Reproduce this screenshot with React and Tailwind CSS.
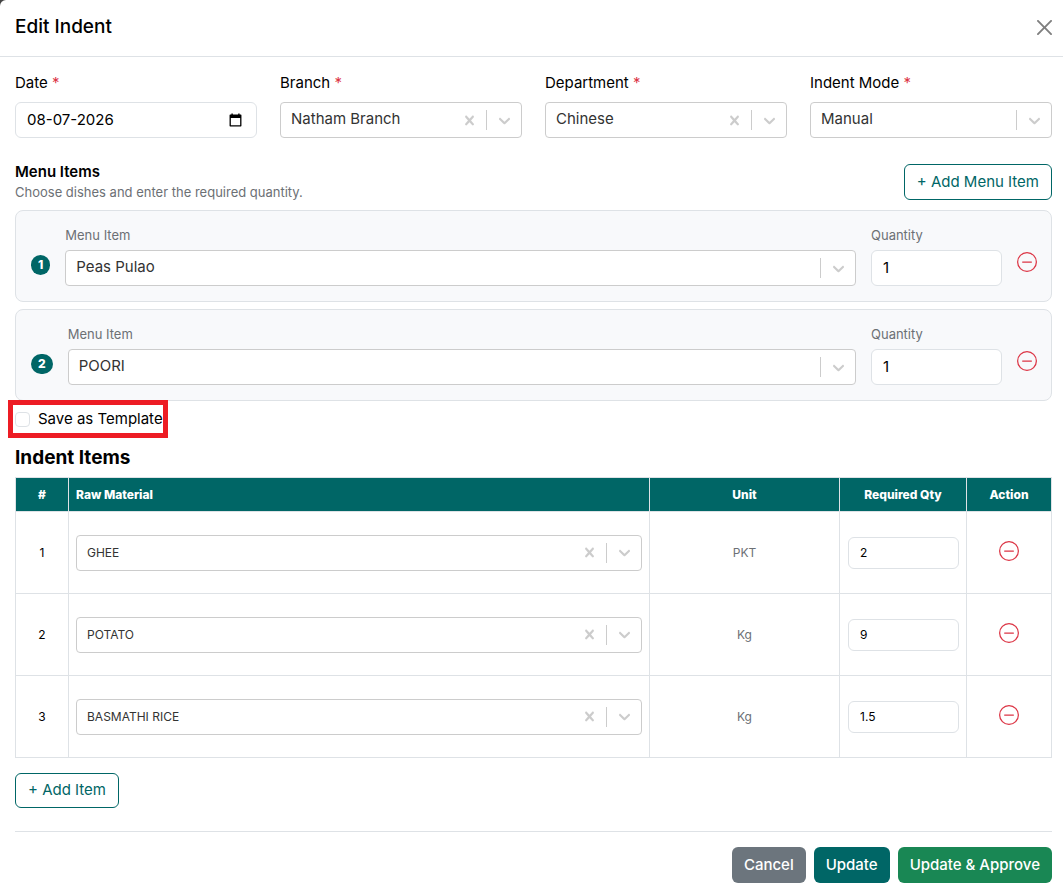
import { useState } from "react";
import { BsDashCircle } from "react-icons/bs";

const menuItems = [
  { id: 1, name: "Peas Pulao", qty: "1" },
  { id: 2, name: "POORI", qty: "1" },
];

const indentItems = [
  { id: 1, name: "GHEE", unit: "PKT", qty: "2" },
  { id: 2, name: "POTATO", unit: "Kg", qty: "9" },
  { id: 3, name: "BASMATHI RICE", unit: "Kg", qty: "1.5" },
];



// =====================================
// SELECT BOX
// =====================================

function SelectBox({ id, label, value, clearable, small }) {

  return (

    <div className="flex h-9 w-full items-center rounded-sm border border-[#cccccc] bg-white">

      <select
        id={id}
        aria-label={label}
        defaultValue={value}
        className={
          "h-full min-w-0 flex-1 appearance-none bg-transparent pl-[10px] text-[#333333] outline-none " +
          (small ? "text-xs" : "pb-px text-[15px]")
        }
      >
        <option>{value}</option>
      </select>

      {clearable && (

        <button type="button" aria-label="Clear" className="pr-[7px] pl-2 text-[#cccccc]">

          <svg width="19" height="19" viewBox="0 0 20 20" fill="currentColor">
            <path d="M14.348 14.849c-0.469 0.469-1.229 0.469-1.697 0l-2.651-3.030-2.651 3.029c-0.469 0.469-1.229 0.469-1.697 0-0.469-0.469-0.469-1.229 0-1.697l2.758-3.15-2.759-3.152c-0.469-0.469-0.469-1.228 0-1.697s1.228-0.469 1.697 0l2.652 3.031 2.651-3.031c0.469-0.469 1.228-0.469 1.697 0s0.469 1.229 0 1.697l-2.758 3.152 2.758 3.15c0.469 0.469 0.469 1.229 0 1.698z" />
          </svg>

        </button>
      )}

      <span className="h-5 w-px bg-[#cccccc]"></span>

      <span className="pr-[7px] pl-2 text-[#cccccc]">

        <svg width="19" height="19" viewBox="0 0 20 20" fill="currentColor">
          <path d="M4.516 7.548c0.436-0.446 1.043-0.481 1.576 0l3.908 3.747 3.908-3.747c0.533-0.481 1.141-0.446 1.574 0 0.436 0.445 0.408 1.197 0 1.615-0.406 0.418-4.695 4.502-4.695 4.502-0.217 0.223-0.502 0.335-0.787 0.335s-0.57-0.112-0.789-0.335c0 0-4.287-4.084-4.695-4.502s-0.436-1.17 0-1.615z" />
        </svg>

      </span>

    </div>
  );
}



function FieldLabel({ id, text }) {

  return (

    <label htmlFor={id} className="mb-2 block leading-[22px]">
      {text} <span className="text-[#dc3545]">*</span>
    </label>
  );
}



function RemoveButton() {

  return (

    <button type="button" aria-label="Remove" className="block text-[#dc3545]">
      <BsDashCircle size={20} />
    </button>
  );
}



function App() {

  const [saveTemplate, setSaveTemplate] = useState(false);

  return (

    <div className="min-h-screen bg-[#444444]">

      <div className="min-h-screen rounded-tl-md bg-white font-['Inter',sans-serif] text-[15px] text-black">

        {/* HEADER */}

        <div className="flex h-[57px] items-center justify-between border-b border-[#dee2e6] pr-[11px] pb-[2px] pl-[15px]">

          <h1 className="text-[19px] font-medium">Edit Indent</h1>

          <button type="button" aria-label="Close" className="text-[#7f7f7f]">

            <svg width="15" height="15" viewBox="0 0 16 16" fill="currentColor">
              <path d="M.293.293a1 1 0 0 1 1.414 0L8 6.586 14.293.293a1 1 0 1 1 1.414 1.414L9.414 8l6.293 6.293a1 1 0 0 1-1.414 1.414L8 9.414l-6.293 6.293a1 1 0 0 1-1.414-1.414L6.586 8 .293 1.707a1 1 0 0 1 0-1.414z" />
            </svg>

          </button>

        </div>



        <div className="pt-[15px] pr-[11px] pb-[10px] pl-[15px]">

          {/* FORM FIELDS */}

          <div className="grid grid-cols-4 gap-[23px]">

            <div>
              <FieldLabel id="date" text="Date" />

              <div className="flex h-9 items-center rounded-md border border-[#dee2e6] pr-[14px]">

                <input
                  id="date"
                  type="text"
                  defaultValue="08-07-2026"
                  className="h-full min-w-0 flex-1 bg-transparent pb-[2px] pl-[11px] outline-none"
                />

                <button type="button" aria-label="Open calendar">
                  <svg width="13" height="14" viewBox="0 0 13 14">
                    <path d="M1.2 2.2h10.6v10.6H1.2z" fill="none" stroke="#000" strokeWidth="1.3" strokeLinejoin="round" />
                    <path d="M1 2h11v3H1zM2.4.4h1.4v2H2.4zM9.2.4h1.4v2H9.2z" />
                  </svg>
                </button>

              </div>
            </div>

            <div>
              <FieldLabel id="branch" text="Branch" />
              <SelectBox id="branch" value="Natham Branch" clearable />
            </div>

            <div>
              <FieldLabel id="department" text="Department" />
              <SelectBox id="department" value="Chinese" clearable />
            </div>

            <div>
              <FieldLabel id="mode" text="Indent Mode" />
              <SelectBox id="mode" value="Manual" />
            </div>

          </div>



          {/* MENU ITEMS */}

          <div className="mt-[26px] mb-[10px] flex items-start justify-between">

            <div className="-mt-1">
              <h2 className="leading-6 font-semibold">Menu Items</h2>
              <p className="text-[13px] leading-4 text-[#6c7075]">
                Choose dishes and enter the required quantity.
              </p>
            </div>

            <button
              type="button"
              className="h-9 rounded-md border border-[#006666] px-3 text-[#006666]"
            >
              + Add Menu Item
            </button>

          </div>

          <div className="flex flex-col gap-[7px]">

            {menuItems.map((item) => (

              <div
                key={item.id}
                className="flex items-center gap-[15px] rounded-lg border border-[#dee2e6] bg-[#f8f9fb] py-[15px] pr-[14px] pl-[15px]"
              >

                <div className="pt-[18px]">
                  <span className="block rounded-full bg-[#006666] px-[7px] text-xs leading-5 font-extrabold text-white">
                    {item.id}
                  </span>
                </div>

                <div className="flex-1">
                  <label
                    htmlFor={"menu-" + item.id}
                    className="mb-[6px] block text-[13px] leading-[18px] text-[#6c7075]"
                  >
                    Menu Item
                  </label>
                  <SelectBox id={"menu-" + item.id} value={item.name} />
                </div>

                <div className="w-[131px]">
                  <label
                    htmlFor={"menu-qty-" + item.id}
                    className="mb-[6px] block text-[13px] leading-[18px] text-[#6c7075]"
                  >
                    Quantity
                  </label>
                  <input
                    id={"menu-qty-" + item.id}
                    type="text"
                    defaultValue={item.qty}
                    className="block h-9 w-full rounded-md border border-[#dee2e6] bg-white px-[11px] pb-[2px]"
                  />
                </div>

                <div className="pt-3">
                  <RemoveButton />
                </div>

              </div>
            ))}

          </div>



          {/* SAVE AS TEMPLATE */}

          <div className="relative mt-[7px] w-fit">

            <label className="flex items-center gap-2 leading-[22px]">
              <input
                type="checkbox"
                checked={saveTemplate}
                onChange={(e) => setSaveTemplate(e.target.checked)}
                className="size-[15px] appearance-none rounded-sm border border-[#dee2e6] bg-white checked:bg-[#006666]"
              />
              Save as Template
            </label>

            <span className="pointer-events-none absolute -inset-y-2 -right-[5px] -left-[7px] border-5 border-[#ed1c24]"></span>

          </div>



          {/* INDENT ITEMS */}

          <h2 className="mt-[17px] mb-2 text-[19px] leading-[22px] font-bold">Indent Items</h2>

          <table className="w-full table-fixed border-collapse text-center text-xs">

            <thead>
              <tr className="h-[34px] bg-[#006666] text-white">
                <th className="w-[53px] border border-[#dee2e6] font-extrabold">#</th>
                <th className="border border-[#dee2e6] px-[7px] text-left font-extrabold">Raw Material</th>
                <th className="w-[190px] border border-[#dee2e6] font-extrabold">Unit</th>
                <th className="w-[127px] border border-[#dee2e6] font-extrabold">Required Qty</th>
                <th className="w-[85px] border border-[#dee2e6] font-extrabold">Action</th>
              </tr>
            </thead>

            <tbody>
              {indentItems.map((item) => (

                <tr key={item.id} className="h-[82px]">

                  <td className="border border-[#dee2e6]">{item.id}</td>

                  <td className="border border-[#dee2e6] px-[7px] text-left">
                    <SelectBox
                      id={"raw-" + item.id}
                      label="Raw Material"
                      value={item.name}
                      clearable
                      small
                    />
                  </td>

                  <td className="border border-[#dee2e6] text-[#6c7075]">{item.unit}</td>

                  <td className="border border-[#dee2e6] pr-[7px] pl-2">
                    <input
                      type="text"
                      aria-label="Required Qty"
                      defaultValue={item.qty}
                      className="block h-8 w-full rounded-md border border-[#dee2e6] bg-white px-[11px]"
                    />
                  </td>

                  <td className="border border-[#dee2e6] pb-1">
                    <div className="flex justify-center">
                      <RemoveButton />
                    </div>
                  </td>

                </tr>
              ))}
            </tbody>

          </table>

          <button
            type="button"
            className="mt-[15px] h-[35px] rounded-md border border-[#006666] px-3 text-[#006666]"
          >
            + Add Item
          </button>



          {/* FOOTER */}

          <div className="mt-[23px] flex justify-end gap-2 border-t border-[#dee2e6] pt-[15px] font-medium text-white">

            <button type="button" className="h-9 rounded-md bg-[#6c757d] px-3">
              Cancel
            </button>

            <button type="button" className="h-9 rounded-md bg-[#006666] px-3">
              Update
            </button>

            <button type="button" className="h-9 rounded-md bg-[#198754] px-3">
              Update &amp; Approve
            </button>

          </div>

        </div>

      </div>

    </div>
  );
}

export default App;
